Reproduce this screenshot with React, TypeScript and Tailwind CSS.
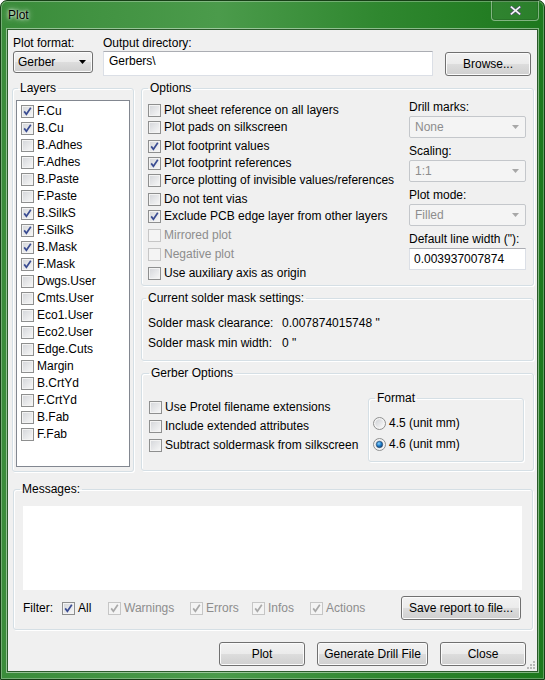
import type { ReactNode } from "react"

function cn(...parts: (string | false | undefined)[]) {
  return parts.filter(Boolean).join(" ")
}

function CheckBox({ checked, disabled }: { checked?: boolean; disabled?: boolean }) {
  return (
    <span
      className={cn(
        "relative inline-block h-[13px] w-[13px] shrink-0 border",
        disabled
          ? "border-[#c6c6c6] bg-[#f4f4f4]"
          : "border-[#8e8f8f] bg-[linear-gradient(135deg,#d3d5d9,#f8f8f8)] shadow-[inset_0_0_0_1px_#f3f3f3]",
      )}
    >
      {checked && (
        <svg viewBox="0 0 11 11" className="absolute left-0 top-0 h-[11px] w-[11px]">
          <polyline
            points="2.2,5.4 4.4,8.2 8.8,1.8"
            fill="none"
            stroke={disabled ? "#a9a9a9" : "#3a4c92"}
            strokeWidth="1.7"
          />
        </svg>
      )}
    </span>
  )
}

function CheckRow({
  label,
  checked,
  disabled,
  className,
}: {
  label: string
  checked?: boolean
  disabled?: boolean
  className?: string
}) {
  return (
    <div className={cn("flex h-[17px] items-center gap-[3px]", className)}>
      <CheckBox checked={checked} disabled={disabled} />
      <span className={cn("whitespace-nowrap", disabled && "text-[#8d8d8d]")}>{label}</span>
    </div>
  )
}

function Radio({ checked }: { checked?: boolean }) {
  return (
    <svg viewBox="0 0 13 13" className="h-[13px] w-[13px] shrink-0">
      <defs>
        <linearGradient id="rb" x1="0" y1="0" x2="1" y2="1">
          <stop offset="0" stopColor="#cfd1d5" />
          <stop offset="1" stopColor="#fafafa" />
        </linearGradient>
        <radialGradient id="dot" cx="0.4" cy="0.35" r="0.7">
          <stop offset="0" stopColor="#8fd3ff" />
          <stop offset="0.5" stopColor="#1f7fcc" />
          <stop offset="1" stopColor="#0d3c72" />
        </radialGradient>
      </defs>
      <circle cx="6.5" cy="6.5" r="6" fill="#f4f4f4" stroke="#8e8f8f" />
      <circle cx="6.5" cy="6.5" r="4.2" fill="url(#rb)" />
      {checked && <circle cx="6.5" cy="6.5" r="3.2" fill="url(#dot)" stroke="#2a4766" strokeWidth="0.6" />}
    </svg>
  )
}

function Arrow({ disabled }: { disabled?: boolean }) {
  return (
    <svg viewBox="0 0 7 4" className="h-[4px] w-[7px]">
      <polygon points="0,0 7,0 3.5,4" fill={disabled ? "#a7a7a7" : "#000"} />
    </svg>
  )
}

const btnLook =
  "rounded-[3px] border border-[#707070] bg-[linear-gradient(#f2f2f2,#ebebeb_50%,#dddddd_50%,#cfcfcf)] shadow-[inset_0_0_0_1px_#fbfbfb]"

function Button({ children, className }: { children: ReactNode; className?: string }) {
  return (
    <div className={cn("flex h-[24px] items-center justify-center", btnLook, className)}>
      {children}
    </div>
  )
}

function DisabledSelect({ value }: { value: string }) {
  return (
    <div className="flex h-[22px] w-[117px] items-center justify-between rounded-[2px] border border-[#c4c7cb] bg-[#f4f4f4] pl-[5px] pr-[6px] text-[#8d8d8d]">
      <span>{value}</span>
      <Arrow disabled />
    </div>
  )
}

function Group({
  title,
  className,
  legendClass,
  children,
}: {
  title: string
  className?: string
  legendClass?: string
  children: ReactNode
}) {
  return (
    <fieldset
      className={cn(
        "rounded-[3px] border border-[#d5dfe5] shadow-[inset_1px_1px_0_#ffffff,1px_1px_0_#ffffff]",
        className,
      )}
    >
      <legend className={cn("px-[2px] leading-[15px]", legendClass ?? "ml-[6px]")}>{title}</legend>
      {children}
    </fieldset>
  )
}

const layers: [string, boolean][] = [
  ["F.Cu", true],
  ["B.Cu", true],
  ["B.Adhes", false],
  ["F.Adhes", false],
  ["B.Paste", false],
  ["F.Paste", false],
  ["B.SilkS", true],
  ["F.SilkS", true],
  ["B.Mask", true],
  ["F.Mask", true],
  ["Dwgs.User", false],
  ["Cmts.User", false],
  ["Eco1.User", false],
  ["Eco2.User", false],
  ["Edge.Cuts", false],
  ["Margin", false],
  ["B.CrtYd", false],
  ["F.CrtYd", false],
  ["B.Fab", false],
  ["F.Fab", false],
]

export default function App() {
  return (
    <div className="relative flex h-[680px] w-[545px] flex-col overflow-hidden rounded-t-[7px] border border-[#163f16] bg-[linear-gradient(90deg,#3a8c3a,#4b9b4b_40%,#2f872f_70%,#1d781d)] font-['Liberation_Sans',Arial,sans-serif] text-[12px] leading-[15px] text-black shadow-[inset_0_0_0_1px_rgba(255,255,255,0.3)]">
      {/* title bar */}
      <div className="relative h-[28px] shrink-0">
        <span className="absolute left-[7px] top-[7px] [text-shadow:0_0_6px_#ffffff,0_0_3px_#ffffff]">Plot</span>
        <div className="absolute right-[5px] top-[-1px] flex h-[21px] w-[48px] items-center justify-center rounded-b-[4px] border border-[rgba(255,255,255,0.4)] bg-[rgba(255,255,255,0.06)] shadow-[inset_0_0_0_1px_rgba(0,0,0,0.12)]">
          <svg viewBox="0 0 11 9" className="h-[9px] w-[11px]">
            <path d="M1.5 1.2 L9.5 7.8 M9.5 1.2 L1.5 7.8" stroke="#4a5564" strokeWidth="3.2" strokeLinecap="square" />
            <path d="M1.5 1.2 L9.5 7.8 M9.5 1.2 L1.5 7.8" stroke="#f4f6f8" strokeWidth="1.7" strokeLinecap="square" />
          </svg>
        </div>
      </div>

      {/* client area */}
      <div className="relative mx-[6px] flex h-[643px] flex-col border border-[#2b5a2b] bg-[#f0f0f0] shadow-[0_0_0_1px_rgba(255,255,255,0.45)]">
        {/* format + directory */}
        <div className="flex pl-[5px] pt-[6px]">
          <div className="flex w-[80px] flex-col">
            <span>Plot format:</span>
            <div className={cn("flex h-[22px] w-[80px] items-center justify-between pl-[4px] pr-[6px]", btnLook)}>
              <span>Gerber</span>
              <Arrow />
            </div>
          </div>
          <div className="ml-[10px] flex flex-col">
            <span>Output directory:</span>
            <div className="h-[25px] w-[330px] border border-[#dbdfe6] border-t-[#abadb3] bg-white pl-[5px] pt-[2px]">
              Gerbers\
            </div>
          </div>
          <Button className="ml-[12px] mt-[16px] w-[86px]">Browse...</Button>
        </div>

        {/* layers + options */}
        <div className="ml-[4px] mt-[5px] flex">
          <Group title="Layers" className="h-[391px] w-[122px]" legendClass="ml-[5px]">
            <div className="ml-[3px] mt-[4px] h-[367px] w-[114px] border border-[#828790] bg-white pl-[4px] pt-[2px]">
              {layers.map(([name, on]) => (
                <CheckRow key={name} label={name} checked={on} />
              ))}
            </div>
          </Group>

          <div className="ml-[7px] flex w-[393px] flex-col">
            <Group title="Options" className="h-[205px]">
              <div className="flex">
                <div className="flex w-[267px] flex-col pl-[6px] pt-[6px]">
                  <CheckRow label="Plot sheet reference on all layers" />
                  <CheckRow label="Plot pads on silkscreen" />
                  <CheckRow label="Plot footprint values" checked className="mt-[2px]" />
                  <CheckRow label="Plot footprint references" checked />
                  <CheckRow label="Force plotting of invisible values/references" />
                  <CheckRow label="Do not tent vias" className="mt-[2px]" />
                  <CheckRow label="Exclude PCB edge layer from other layers" checked />
                  <CheckRow label="Mirrored plot" disabled className="mt-[2px]" />
                  <CheckRow label="Negative plot" disabled className="mt-[2px]" />
                  <CheckRow label="Use auxiliary axis as origin" className="mt-[2px]" />
                </div>
                <div className="flex w-[117px] flex-col pt-[4px]">
                  <span>Drill marks:</span>
                  <div className="mt-[1px]">
                    <DisabledSelect value="None" />
                  </div>
                  <span className="mt-[6px]">Scaling:</span>
                  <div className="mt-[1px]">
                    <DisabledSelect value="1:1" />
                  </div>
                  <span className="mt-[6px]">Plot mode:</span>
                  <div className="mt-[1px]">
                    <DisabledSelect value="Filled" />
                  </div>
                  <span className="mt-[6px]">Default line width ("):</span>
                  <div className="mt-[1px] flex h-[22px] w-[117px] items-center border border-[#dbdfe6] border-t-[#abadb3] bg-white pl-[4px]">
                    0.003937007874
                  </div>
                </div>
              </div>
            </Group>

            <Group title="Current solder mask settings:" className="mt-[5px] h-[70px]" legendClass="ml-[4px]">
              <div className="mt-[7px] flex flex-col pl-[6px]">
                <div className="flex h-[20px] items-center">
                  <span className="w-[134px]">Solder mask clearance:</span>
                  <span>0.007874015748 "</span>
                </div>
                <div className="flex h-[20px] items-center">
                  <span className="w-[134px]">Solder mask min width:</span>
                  <span>0 "</span>
                </div>
              </div>
            </Group>

            <Group title="Gerber Options" className="mt-[5px] h-[105px]" legendClass="ml-[7px]">
              <div className="flex">
                <div className="flex w-[226px] flex-col pl-[7px] pt-[18px]">
                  <CheckRow label="Use Protel filename extensions" />
                  <CheckRow label="Include extended attributes" className="mt-[2px]" />
                  <CheckRow label="Subtract soldermask from silkscreen" className="mt-[2px]" />
                </div>
                <Group title="Format" className="mt-[10px] h-[71px] w-[156px]">
                  <div className="mt-[7px] flex flex-col pl-[4px]">
                    <div className="flex h-[21px] items-center gap-[3px]">
                      <Radio />
                      <span>4.5 (unit mm)</span>
                    </div>
                    <div className="flex h-[21px] items-center gap-[3px]">
                      <Radio checked />
                      <span>4.6 (unit mm)</span>
                    </div>
                  </div>
                </Group>
              </div>
            </Group>
          </div>
        </div>

        {/* messages */}
        <Group title="Messages:" className="ml-[5px] mt-[10px] h-[148px] w-[520px]">
          <div className="ml-[9px] mt-[9px] h-[84px] w-[499px] bg-white" />
          <div className="ml-[9px] mt-[6px] flex h-[24px] w-[499px] items-center">
            <span className="w-[39px]">Filter:</span>
            <div className="flex w-[46px] items-center gap-[3px]">
              <CheckBox checked />
              <span>All</span>
            </div>
            <div className="flex w-[82px] items-center gap-[3px]">
              <CheckBox checked disabled />
              <span className="text-[#8d8d8d]">Warnings</span>
            </div>
            <div className="flex w-[62px] items-center gap-[3px]">
              <CheckBox checked disabled />
              <span className="text-[#8d8d8d]">Errors</span>
            </div>
            <div className="flex w-[58px] items-center gap-[3px]">
              <CheckBox checked disabled />
              <span className="text-[#8d8d8d]">Infos</span>
            </div>
            <div className="flex items-center gap-[3px]">
              <CheckBox checked disabled />
              <span className="text-[#8d8d8d]">Actions</span>
            </div>
            <Button className="ml-auto mr-[1px] w-[120px]">Save report to file...</Button>
          </div>
        </Group>

        {/* dialog buttons */}
        <div className="mt-[12px] flex justify-end gap-[12px] pr-[11px]">
          <Button className="w-[86px]">Plot</Button>
          <Button className="w-[111px]">Generate Drill File</Button>
          <Button className="w-[86px]">Close</Button>
        </div>

        {/* size grip */}
        <div className="absolute bottom-[2px] right-[2px] grid grid-cols-3 gap-[1px]">
          <span className="h-[2px] w-[2px]" />
          <span className="h-[2px] w-[2px]" />
          <span className="h-[2px] w-[2px] bg-[#b8b8b8]" />
          <span className="h-[2px] w-[2px]" />
          <span className="h-[2px] w-[2px] bg-[#b8b8b8]" />
          <span className="h-[2px] w-[2px] bg-[#b8b8b8]" />
          <span className="h-[2px] w-[2px] bg-[#b8b8b8]" />
          <span className="h-[2px] w-[2px] bg-[#b8b8b8]" />
          <span className="h-[2px] w-[2px] bg-[#b8b8b8]" />
        </div>
      </div>
    </div>
  )
}
